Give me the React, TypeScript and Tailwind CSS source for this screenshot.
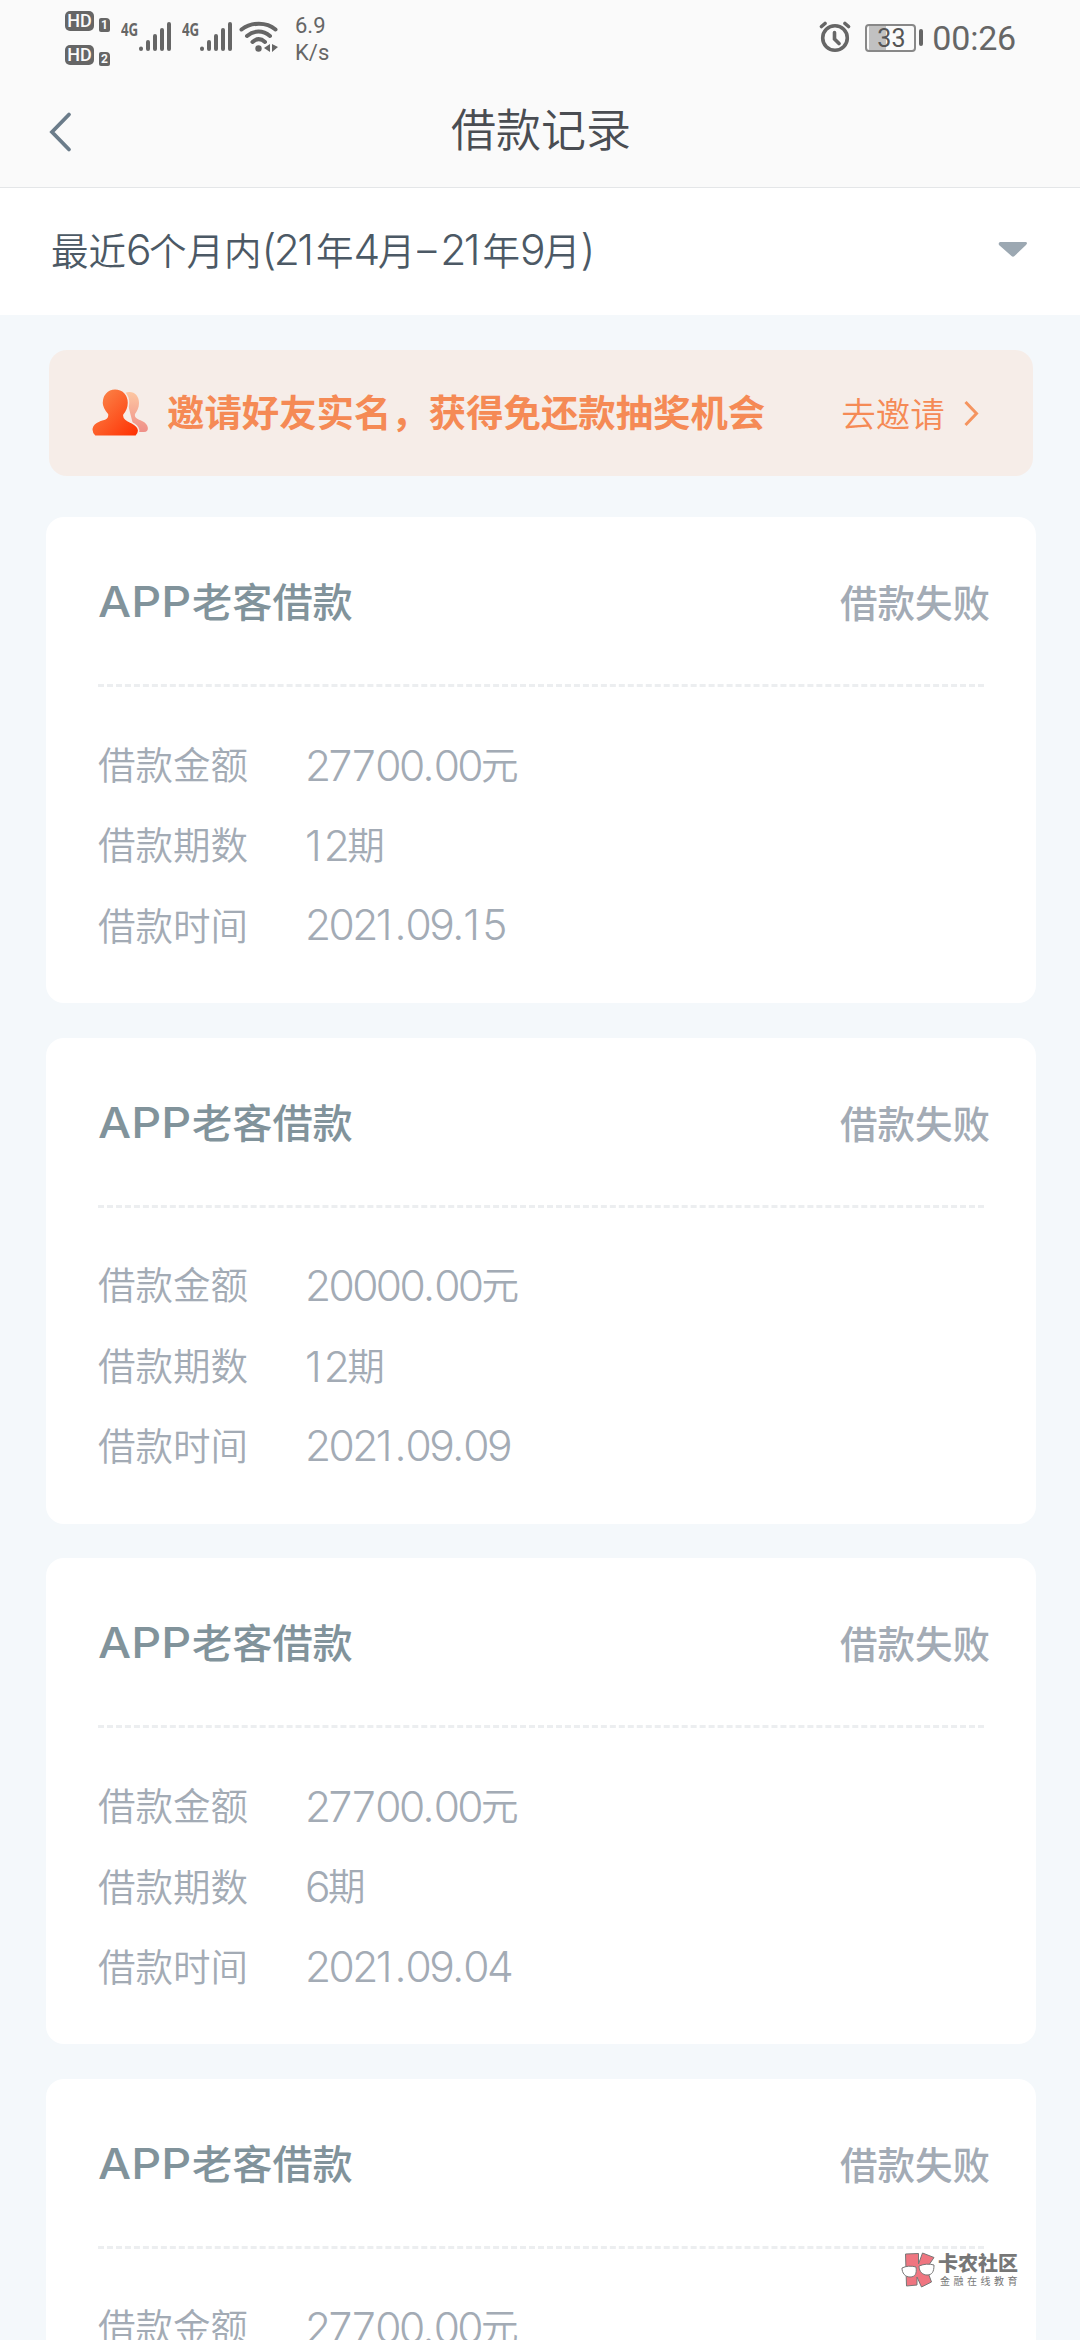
import React from 'react';

const records = [
  { amount: '27700.00', periods: '12', date: '2021.09.15' },
  { amount: '20000.00', periods: '12', date: '2021.09.09' },
  { amount: '27700.00', periods: '6', date: '2021.09.04' },
  { amount: '27700.00', periods: '12', date: '2021.09.03' },
];

// spacing for the glyphs that are narrower than a regular digit
const spacing: Record<string, string> = {
  '1': 'tracking-[2.1px]',
  '7': 'tracking-[-0.4px]',
  '.': 'tracking-[-0.9px]',
  '–': 'mx-[1px] inline-block w-[23px] origin-center scale-x-[0.9] tracking-normal',
};

const Num = ({ children }: { children: string }) => (
  <span className="font-[Inter] text-[42.5px] tracking-[-2.6px] [font-kerning:none]">
    {children.split(/([17.–])/).map((part, i) =>
      spacing[part] ? <span key={i} className={spacing[part]}>{part}</span> : part
    )}
  </span>
);

const HdBadge = ({ sim }: { sim: string }) => (
  <div className="flex h-[21px] items-end gap-[5px] font-[Roboto]">
    <span className="flex h-[20px] w-[29px] items-center justify-center self-start rounded-[5px] bg-[#666] text-[18px] font-medium leading-none text-[#fafafa]">HD</span>
    <span className="flex h-[14px] w-[11px] items-center justify-center rounded-[2px] rounded-tr-[4px] bg-[#666] text-[12px] font-bold leading-none text-[#fafafa]">{sim}</span>
  </div>
);

const Signal = () => (
  <div className="flex h-[31px] w-[52px] font-['Open_Sans']">
    <span className="h-[17px] w-[17px] origin-left scale-x-[0.74] text-[18px] font-bold leading-[16px] text-[#666]">4G</span>
    <svg className="h-[31px] w-[35px]" viewBox="0 0 35 31" fill="none" stroke="#666" strokeWidth="4" strokeLinecap="round">
      <path d="M3 27.5v.6M10 21v7M17 15v13M24 9v19M31 3v25" />
    </svg>
  </div>
);

const StatusBar = () => (
  <div className="flex h-[75px] items-start justify-between pl-[65px] pr-[64px] text-[#666]">
    <div className="flex">
      <div className="flex flex-col gap-[13px] pt-[11px]">
        <HdBadge sim="1" />
        <HdBadge sim="2" />
      </div>
      <div className="ml-[11px] flex gap-[9px] pt-[21px]">
        <Signal />
        <Signal />
      </div>
      <svg className="ml-[5px] mt-[21px] h-[32px] w-[40px]" viewBox="0 0 40 32" fill="none" stroke="#666" strokeWidth="4" strokeLinecap="round">
        <path d="M2.500 8.500C12.500 .8 27.500 .8 36.500 8.500M8 15c7-6 16-6 23 0M13.500 21c4-3.600 8.500-3.600 12.500 0" />
        <circle cx="19.500" cy="27.500" r="3.200" fill="#666" stroke="none" />
        <path d="M31 23v8l-6-4zM33 23v8l6-5z" fill="#666" stroke="none" />
      </svg>
      <div className="ml-[16px] pt-[12px] font-[Roboto] text-[22px] leading-[27px]">
        <div>6.9</div>
        <div>K/s</div>
      </div>
    </div>
    <div className="flex items-start font-[Roboto]">
      <svg className="mt-[21px] h-[32px] w-[32px]" viewBox="0 0 32 32" fill="none" stroke="#666" strokeWidth="3.600" strokeLinecap="round">
        <circle cx="16" cy="17" r="12.300" />
        <path d="M15.500 11.500v6.500l4.500 4.500M2.500 5.500l3.500-3M29.500 5.500l-3.500-3" />
      </svg>
      <div className="ml-[14px] mt-[24px] flex h-[28px] w-[51px] items-center rounded-[4px] border-2 border-[#888] bg-[linear-gradient(90deg,#fafafa_2px,#c1c1c1_2px,#c1c1c1_19px,#fafafa_19px)] pl-[10px] text-[25px] leading-none text-[#555]">33</div>
      <div className="ml-[3px] mt-[29px] h-[17px] w-[4px] rounded-[2px] bg-[#666]" />
      <span className="ml-[9px] mt-[18px] text-[34px] leading-[40px] tracking-[-0.2px]">00:26</span>
    </div>
  </div>
);

const Header = () => (
  <header className="flex h-[113px] items-start border-b border-[#e4e6e8]">
    <svg className="ml-[47px] mt-[35px] h-[44px] w-[28px]" viewBox="0 0 28 44" fill="none" stroke="#6b7c8a" strokeWidth="3.800" strokeLinecap="round">
      <path d="M22 4.500L5 22l17 17.500" />
    </svg>
    <h1 className="mt-[23px] flex-1 pr-[73px] text-center text-[45px] font-[350] leading-[60px] text-[#4a4d52]">借款记录</h1>
  </header>
);

const Banner = () => (
  <div className="ml-[49px] mr-[47px] flex h-[126px] items-center rounded-[18px] bg-[#f6ede8] pl-[42px] text-[#f58a55]">
    <svg className="h-[50px] w-[60px]" viewBox="0 0 60 50">
      <defs>
        <linearGradient id="front" x1="0" y1="0" x2="1" y2="1">
          <stop offset="0.200" stopColor="#fb7b41" />
          <stop offset="1" stopColor="#ff2d00" />
        </linearGradient>
        <linearGradient id="back" x1="0" y1="0" x2="0" y2="1">
          <stop offset="0" stopColor="#fdc7a2" />
          <stop offset="1" stopColor="#ef8f88" />
        </linearGradient>
      </defs>
      <path d="M34 5c8-3 14 2 14 10 0 5-2 8-4 11-1 4 3 5 7 7 7 3 8 11 2 11h-9z" fill="url(#back)" />
      <path d="M24 .8c8 0 13.500 6 13.500 14 0 5-2 9-4.500 12-1 4 4 6 8 8 8 4 8 9.500 4 13.500H4C-1 44-.5 36 8 33c5-2 9-2 8.500-6.500C13.500 23 11 20 11 15c0-8 5-14.200 13-14.200z" fill="url(#front)" stroke="#f6ede8" strokeWidth="1.500" />
    </svg>
    <span className="ml-[16px] pb-[4px] text-[37.400px] font-bold leading-[50px]">邀请好友实名，获得免还款抽奖机会</span>
    <span className="ml-[76px] pb-[2px] text-[34.500px] font-[350] leading-[50px]">去邀请</span>
    <svg className="ml-[17px] h-[30px] w-[20px]" viewBox="0 0 20 30" fill="none" stroke="#f5945f" strokeWidth="3">
      <path d="M3.500 4L14.500 15.500 3.500 27" />
    </svg>
  </div>
);

const Row = ({ label, children }: { label: string; children: React.ReactNode }) => (
  <div className="flex h-[80.500px] items-center leading-[70px]">
    <span className="w-[207px] pb-[3px]">{label}</span>
    <span className="pb-[1px]">{children}</span>
  </div>
);

const Unit = ({ children }: { children: string }) => <span className="align-[1.5px]">{children}</span>;

const RecordCard = ({ amount, periods, date }: { amount: string; periods: string; date: string }) => (
  <section className="h-[486px] shrink-0 rounded-[18px] bg-white px-[52px]">
    <div className="flex h-[167px] items-center justify-between pt-px">
      <h2 className="text-[40.200px] font-medium leading-[60px] text-[#81939b]">
        <span className="inline-block w-[94px] origin-left scale-x-[1.1] font-[Inter] text-[42.500px]">APP</span>老客借款
      </h2>
      <span className="-mr-[6px] text-[37.500px] font-medium text-[#a3abb5]">借款失败</span>
    </div>
    <div className="border-t-[3px] border-dashed border-[#eceef0]" />
    <div className="pt-[37px] text-[37.500px] font-[350] text-[#a3abb5]">
      <Row label="借款金额"><Num>{amount}</Num><Unit>元</Unit></Row>
      <Row label="借款期数"><Num>{periods}</Num><Unit>期</Unit></Row>
      <Row label="借款时间"><Num>{date}</Num></Row>
    </div>
  </section>
);

const Watermark = () => (
  <div className="absolute left-[901px] top-[2252px] flex">
    <svg className="h-[37px] w-[35px]" viewBox="0 0 35 37" stroke="#777" strokeWidth="1">
      <path d="M4.500 2l13-.5V12l4-11 11.500 4.500-7.500 11 5 13.500-10 5-4.500-10v8L5.500 34z" fill="#ef7580" />
      <path d="M1 16c4-2 9-2.500 14-1 1 7-1 10-6 10s-8-4-8-9zM18 14c5-2 10-2.500 15-1 0 7-2 10-7 10-4 0-8-3-8-9z" fill="#fff" />
    </svg>
    <div className="ml-[2px] w-[84px] text-[#777]">
      <div className="text-[20px] font-black leading-[22px]">卡农社区</div>
      <div className="pl-[2px] pt-[1px] text-[10px] leading-[12px] tracking-[3.500px]">金融在线教育</div>
    </div>
  </div>
);

const App = () => {
  return (
    <div className="relative flex h-[2340px] w-[1080px] flex-col overflow-hidden bg-[#f4f8fb] font-['Noto_Sans_CJK_SC',sans-serif]">
      <div className="shrink-0 bg-[#fafafa]">
        <StatusBar />
        <Header />
      </div>
      <div className="flex h-[127px] shrink-0 items-center justify-between bg-white pb-[4px] pl-[51px] pr-[52px] text-[37.500px] font-[350] text-[#4c5965]">
        <span className="leading-[60px]">
          最近<Num>6</Num>个月内<Num>(21</Num>年<Num>4</Num>月<Num>–21</Num>年<Num>9</Num>月<Num>)</Num>
        </span>
        <svg className="h-[16px] w-[30px]" viewBox="0 0 30 16" fill="#9ca8b2">
          <path d="M2 0h26q2 1 0 3L16.500 14q-1.500 1.500-3 0L1 3Q0 1 2 0z" />
        </svg>
      </div>
      <main className="shrink-0 pt-[35px]">
        <Banner />
        <div className="ml-[46px] mr-[44px] mt-[41px] flex flex-col gap-[34.700px]">
          {records.map((record, i) => (
            <RecordCard key={i} {...record} />
          ))}
        </div>
      </main>
      <Watermark />
    </div>
  );
};

export default App;
